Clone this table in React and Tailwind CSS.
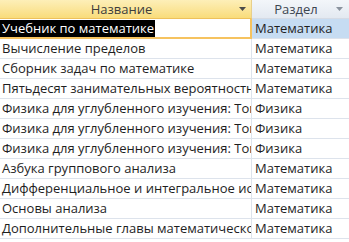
import React from "react";

const rows = [
  ["Учебник по математике", "Математика"],
  ["Вычисление пределов", "Математика"],
  ["Сборник задач по математике", "Математика"],
  ["Пятьдесят занимательных вероятностных задач", "Математика"],
  ["Физика для углубленного изучения: Том 1", "Физика"],
  ["Физика для углубленного изучения: Том 2", "Физика"],
  ["Физика для углубленного изучения: Том 3", "Физика"],
  ["Азбука группового анализа", "Математика"],
  ["Дифференциальное и интегральное исчисление", "Математика"],
  ["Основы анализа", "Математика"],
  ["Дополнительные главы математического анализа", "Математика"],
];

function Arrow({ color }) {
  return (
    <svg width="7" height="4" viewBox="0 0 7 4" className="shrink-0">
      <path d="M0 0h7L3.5 4z" fill={color} />
    </svg>
  );
}

export default function App() {
  return (
    <div
      className="w-[349px] h-[242px] overflow-hidden bg-white text-[13px] leading-none text-[#1e1e1e]"
      style={{ fontFamily: "'Open Sans', 'Liberation Sans', sans-serif" }}
    >
      <div className="flex h-[19px]">
        <div className="w-[252px] shrink-0 flex items-center bg-gradient-to-b from-[#fdefb8] to-[#f9dc7a] border-b border-[#eec15c] border-r border-r-[#e8cf8a]">
          <span className="flex-1 text-center pl-[4px] text-[#3c3c3c]">Название</span>
          <span className="pr-[5px]"><Arrow color="#4a4a4a" /></span>
        </div>
        <div className="flex-1 flex items-center bg-gradient-to-b from-[#f3f6fa] to-[#e3e9f1] border-b border-[#d5dbe5]">
          <span className="flex-1 text-center pl-[4px] text-[#3c4550]">Раздел</span>
          <span className="pr-[6px]"><Arrow color="#8a939e" /></span>
        </div>
      </div>
      {rows.map(([name, cat], i) => (
        <div key={i} className="flex h-[20px]">
          {i === 0 ? (
            <div className="w-[252px] shrink-0 flex items-center overflow-hidden whitespace-nowrap border-b-2 border-r-2 border-[#f6c35f] bg-white">
              <span className="bg-black text-white h-[17px] flex items-center pl-[2px] pr-[1px]">{name}</span>
            </div>
          ) : (
            <div className="w-[252px] shrink-0 flex items-center overflow-hidden whitespace-nowrap border-b border-r border-[#dde3ec] pl-[2px]">
              {name}
            </div>
          )}
          <div
            className={
              "flex-1 flex items-center overflow-hidden whitespace-nowrap border-b border-[#dde3ec] pl-[3px] " +
              (i === 0 ? "bg-[#c6dcf2]" : "bg-white")
            }
          >
            {cat}
          </div>
        </div>
      ))}
    </div>
  );
}
